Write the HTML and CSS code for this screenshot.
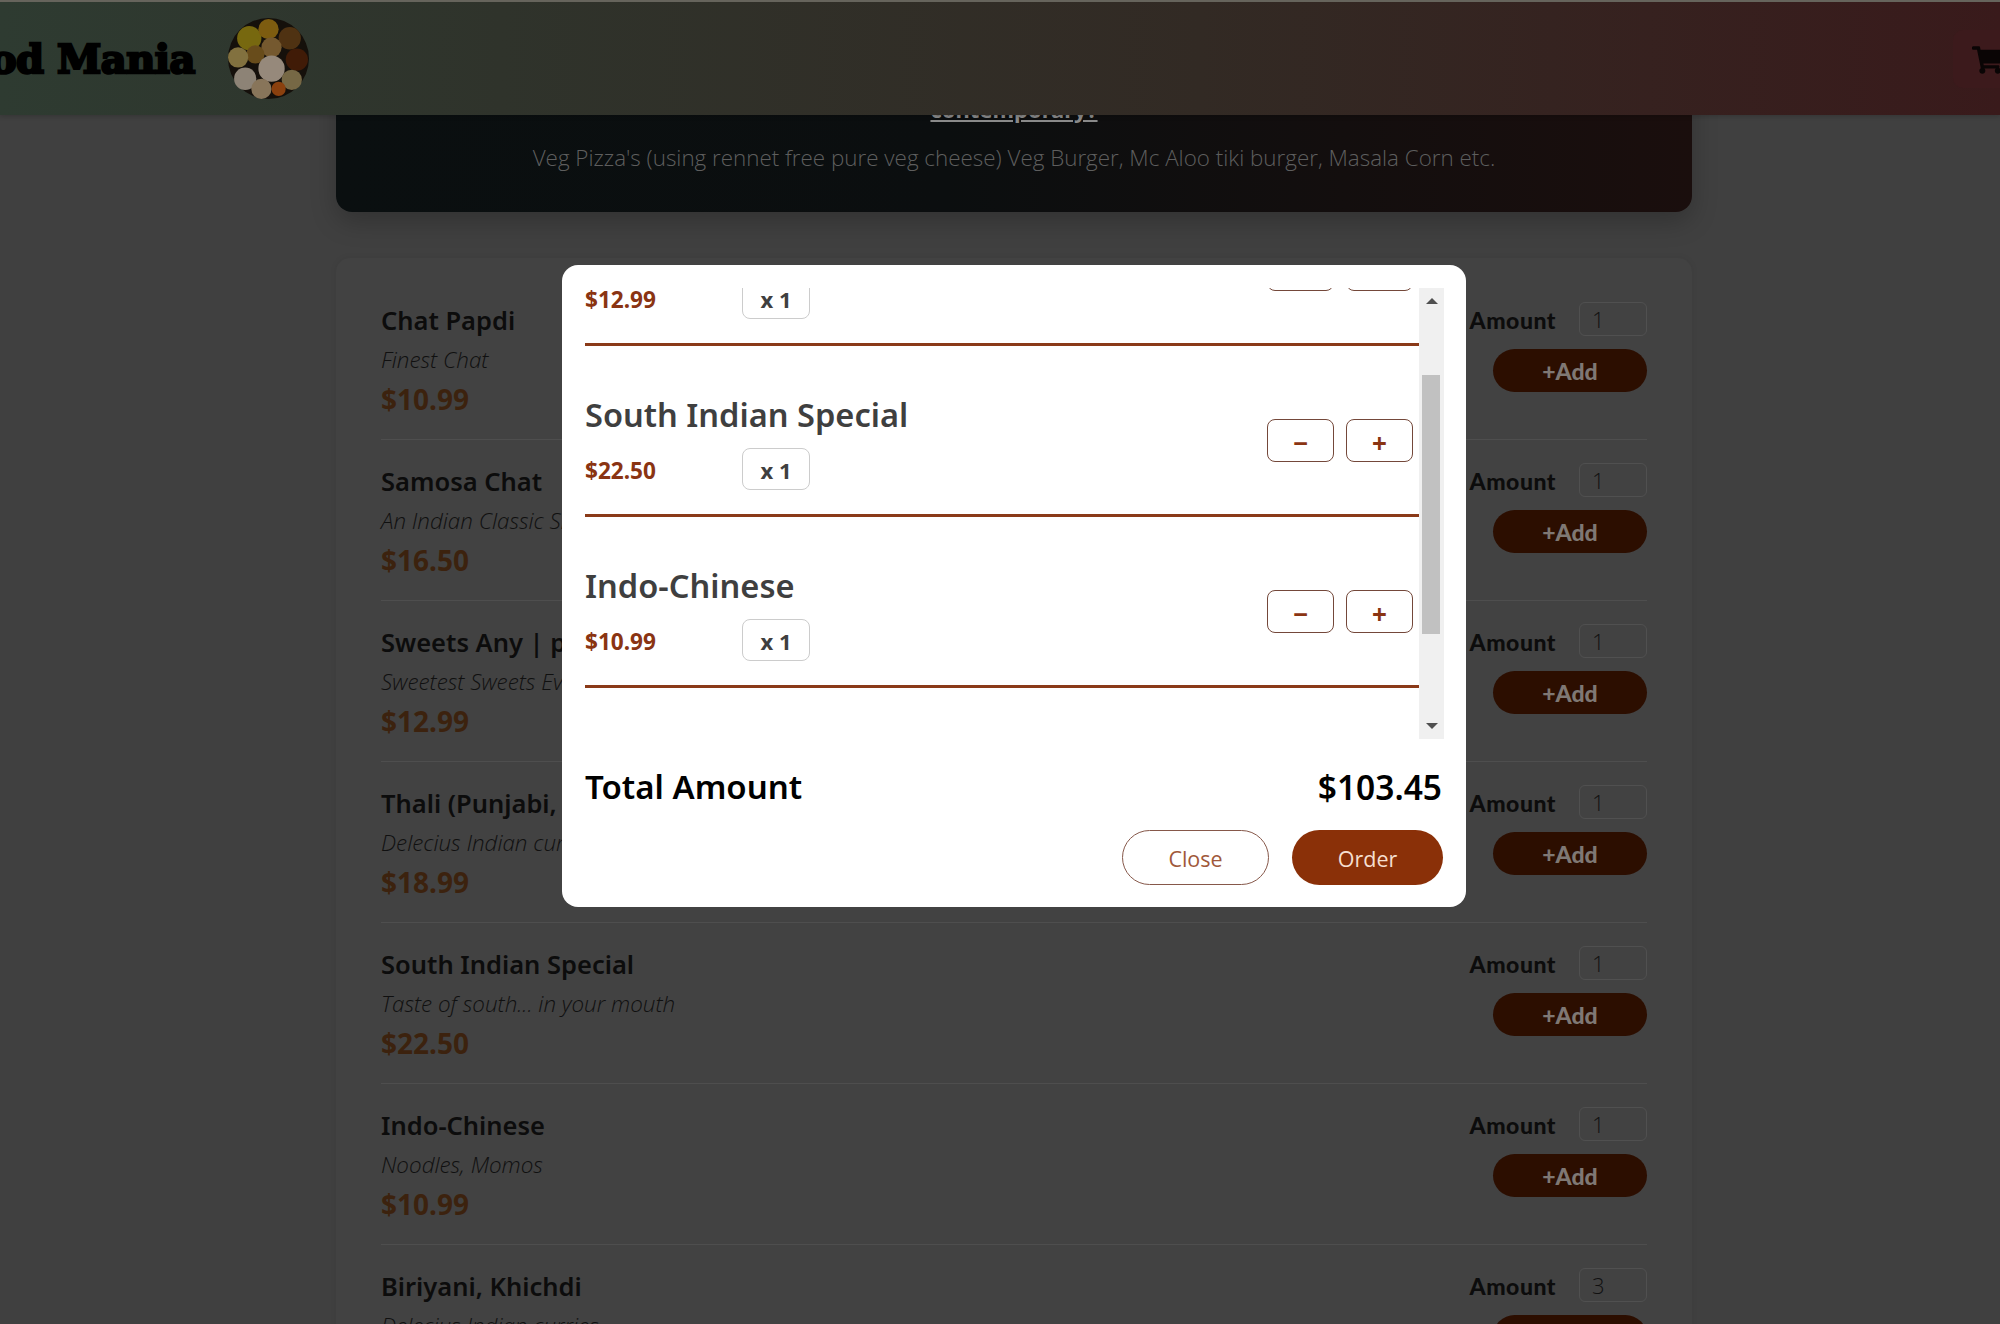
FILE: index.html
```html
<!DOCTYPE html>
<html lang="en">
<head>
  <meta charset="UTF-8" />
  <title>Food Mania</title>
  <link rel="stylesheet" href="styles.css">
</head>
<body>
  <header class="topbar">
    <h1 class="brand">Food Mania</h1>
    <svg class="logo" viewBox="0 0 80 80" aria-hidden="true">
      <circle cx="40" cy="40" r="40" fill="#15100b"/>
      <circle cx="21" cy="20" r="12" fill="#77680f"/>
      <circle cx="40" cy="11" r="10" fill="#7d5c10"/>
      <circle cx="61" cy="20" r="11" fill="#4f3212"/>
      <circle cx="43" cy="29" r="10" fill="#75592f"/>
      <circle cx="27" cy="36" r="9" fill="#684c1b"/>
      <circle cx="68" cy="41" r="11" fill="#401b07"/>
      <circle cx="10" cy="39" r="10" fill="#82713f"/>
      <circle cx="43" cy="50" r="13" fill="#96897b"/>
      <circle cx="17" cy="60" r="11" fill="#8d8376"/>
      <circle cx="33" cy="70" r="10" fill="#88755a"/>
      <circle cx="63" cy="61" r="10" fill="#766845"/>
      <circle cx="50" cy="70" r="7" fill="#8a400e"/>
    </svg>
    <div class="cart">
      <svg viewBox="0 0 576 512" aria-hidden="true"><path d="M528.12 301.319l47.273-208C578.806 78.301 567.391 64 551.99 64H159.208l-9.166-44.81C147.758 8.021 137.93 0 126.529 0H24C10.745 0 0 10.745 0 24v16c0 13.255 10.745 24 24 24h69.883l70.248 343.435C147.325 417.1 136 435.222 136 456c0 30.928 25.072 56 56 56s56-25.072 56-56c0-15.674-6.447-29.835-16.824-40h209.647C430.447 426.165 424 440.326 424 456c0 30.928 25.072 56 56 56s56-25.072 56-56c0-22.172-12.888-41.332-31.579-50.405l5.517-24.276c3.413-15.018-8.002-29.319-23.403-29.319H218.117l-6.545-32h293.145c11.206 0 20.92-7.754 23.403-18.681z"/></svg>
    </div>
  </header>

  <main class="content">
    <section class="banner">
      <h3>contemporary?</h3>
      <p>Veg Pizza's (using rennet free pure veg cheese) Veg Burger, Mc Aloo tiki burger, Masala Corn etc.</p>
    </section>

    <section class="menu">
      <div class="dish">
        <div>
          <h4>Chat Papdi</h4>
          <p class="desc">Finest Chat</p>
          <p class="price">$10.99</p>
        </div>
        <div class="dish-form">
          <label class="amount"><span>Amount</span> <input type="text" value="1"></label>
          <button class="add">+Add</button>
        </div>
      </div>
      <div class="dish">
        <div>
          <h4>Samosa Chat</h4>
          <p class="desc">An Indian Classic Snack</p>
          <p class="price">$16.50</p>
        </div>
        <div class="dish-form">
          <label class="amount"><span>Amount</span> <input type="text" value="1"></label>
          <button class="add">+Add</button>
        </div>
      </div>
      <div class="dish">
        <div>
          <h4>Sweets Any | piece</h4>
          <p class="desc">Sweetest Sweets Ever</p>
          <p class="price">$12.99</p>
        </div>
        <div class="dish-form">
          <label class="amount"><span>Amount</span> <input type="text" value="1"></label>
          <button class="add">+Add</button>
        </div>
      </div>
      <div class="dish">
        <div>
          <h4>Thali (Punjabi, Gujarati)</h4>
          <p class="desc">Delecius Indian curries</p>
          <p class="price">$18.99</p>
        </div>
        <div class="dish-form">
          <label class="amount"><span>Amount</span> <input type="text" value="1"></label>
          <button class="add">+Add</button>
        </div>
      </div>
      <div class="dish">
        <div>
          <h4>South Indian Special</h4>
          <p class="desc">Taste of south... in your mouth</p>
          <p class="price">$22.50</p>
        </div>
        <div class="dish-form">
          <label class="amount"><span>Amount</span> <input type="text" value="1"></label>
          <button class="add">+Add</button>
        </div>
      </div>
      <div class="dish">
        <div>
          <h4>Indo-Chinese</h4>
          <p class="desc">Noodles, Momos</p>
          <p class="price">$10.99</p>
        </div>
        <div class="dish-form">
          <label class="amount"><span>Amount</span> <input type="text" value="1"></label>
          <button class="add">+Add</button>
        </div>
      </div>
      <div class="dish">
        <div>
          <h4>Biriyani, Khichdi</h4>
          <p class="desc">Delecius Indian curries</p>
          <p class="price">$14.99</p>
        </div>
        <div class="dish-form">
          <label class="amount"><span>Amount</span> <input type="text" value="3"></label>
          <button class="add">+Add</button>
        </div>
      </div>
    </section>
  </main>

  <div class="modal">
    <div class="cart-scroll">
      <ul class="cart-items">
        <li class="cart-item">
          <div>
            <h2>Sweets Any | piece</h2>
            <div class="summary">
              <span class="item-price">$12.99</span>
              <span class="qty">x 1</span>
            </div>
          </div>
          <div class="item-actions"><button>−</button><button>+</button></div>
        </li>
        <li class="cart-item">
          <div>
            <h2>South Indian Special</h2>
            <div class="summary">
              <span class="item-price">$22.50</span>
              <span class="qty">x 1</span>
            </div>
          </div>
          <div class="item-actions"><button>−</button><button>+</button></div>
        </li>
        <li class="cart-item">
          <div>
            <h2>Indo-Chinese</h2>
            <div class="summary">
              <span class="item-price">$10.99</span>
              <span class="qty">x 1</span>
            </div>
          </div>
          <div class="item-actions"><button>−</button><button>+</button></div>
        </li>
      </ul>
      <div class="scrollbar">
        <span class="arrow arrow-up"></span>
        <span class="thumb"></span>
        <span class="arrow arrow-down"></span>
      </div>
    </div>
    <div class="total">
      <span class="total-label">Total Amount</span>
      <span class="total-value">$103.45</span>
    </div>
    <div class="modal-actions">
      <button class="btn-close">Close</button>
      <button class="btn-order">Order</button>
    </div>
  </div>
</body>
</html>
```

FILE: styles.css
```css
* {
  box-sizing: border-box;
}
html, body {
  height: 1324px;
  overflow: hidden;
}
body {
  margin: 0;
  font-family: "Noto Sans", "Open Sans", sans-serif;
  background-color: #404040;
}
h1, h2, h3, h4, p, ul {
  margin: 0;
  padding: 0;
}

/* top bar */
.topbar {
  position: relative;
  z-index: 2;
  display: flex;
  align-items: center;
  height: 115px;
  border-top: 2px solid #66645c;
  background: linear-gradient(90deg, #2e3b31 0%, #2f332b 25%, #322a24 60%, #391a1b 100%);
  box-shadow: 0 2px 4px rgba(0,0,0,0.15);
}
.brand {
  margin-left: -62px;
  width: 255px;
  flex-shrink: 0;
  font-family: "DejaVu Serif", serif;
  font-size: 40px;
  font-weight: 700;
  letter-spacing: -0.5px;
  color: #000;
  white-space: nowrap;
  -webkit-text-stroke: 2.5px #000;
}
.logo {
  width: 81px;
  height: 81px;
  margin-left: 35px;
  flex-shrink: 0;
}
.cart {
  margin-left: auto;
  margin-right: -43px;
  width: 90px;
  height: 58px;
  flex-shrink: 0;
  padding: 16px 0 0 19px;
  background-color: #3c1a1c;
  border-radius: 10px;
}
.cart svg {
  display: block;
  width: 31px;
  height: 28px;
  fill: #0a0505;
}

/* page content */
.content {
  width: 1356px;
  margin-left: 336px;
}
.banner {
  height: 137px;
  margin-top: -40px;
  padding-top: 18px;
  text-align: center;
  background: linear-gradient(90deg, #0a0f10 0%, #0b0e0f 45%, #1a0e0d 100%);
  border-radius: 0 0 16px 16px;
  box-shadow: 0 10px 26px rgba(0,0,0,0.22);
}
.banner h3 {
  font-size: 22px;
  line-height: 32px;
  font-weight: 700;
  color: #8a8a8a;
  text-decoration: underline;
}
.banner p {
  margin-top: 17px;
  font-family: "Open Sans", sans-serif;
  font-size: 22.4px;
  font-weight: 300;
  line-height: 32px;
  color: #5e5e5e;
}

.menu {
  margin-top: 46px;
  padding: 21px 45px 0;
  background-color: #424242;
  border-radius: 14px;
  box-shadow: 0 0 6px rgba(0,0,0,0.08);
}
.dish {
  display: flex;
  justify-content: space-between;
  height: 161px;
  padding-top: 21px;
  border-bottom: 1px solid #4e4e4e;
}
.dish h4 {
  font-size: 25.5px;
  line-height: 41px;
  font-weight: 600;
  color: #0c0c0c;
}
.desc {
  font-family: "Open Sans", sans-serif;
  font-size: 22.4px;
  font-style: italic;
  font-weight: 300;
  line-height: 37px;
  color: #101010;
}
.price {
  font-size: 28px;
  line-height: 42px;
  font-weight: 700;
  color: #3c220e;
}
.dish-form {
  display: flex;
  flex-direction: column;
  align-items: flex-end;
  gap: 13px;
  padding-top: 2px;
}
.amount {
  display: flex;
  align-items: center;
  gap: 23px;
  font-family: Lato, sans-serif;
  font-size: 23px;
  font-weight: 900;
  letter-spacing: 0.5px;
  color: #0c0c0c;
}
.amount span {
  padding-top: 2px;
}
.amount input {
  width: 68px;
  height: 34px;
  padding: 0 0 0 12px;
  font-family: "Open Sans", sans-serif;
  font-size: 22px;
  font-weight: 300;
  color: #111;
  background: transparent;
  border: 1px solid #505050;
  border-radius: 6px;
}
.add {
  width: 154px;
  height: 43px;
  font-family: Lato, sans-serif;
  font-size: 23px;
  font-weight: 900;
  color: #7f7874;
  background-color: #2c0e00;
  border: none;
  border-radius: 22px;
}

/* cart modal */
.modal {
  position: fixed;
  left: 562px;
  top: 265px;
  z-index: 5;
  width: 904px;
  height: 642px;
  padding: 23px 22px 22px 23px;
  background: #fff;
  border-radius: 16px;
}
.cart-scroll {
  display: flex;
  height: 451px;
}
.cart-items {
  width: 834px;
  overflow: hidden;
  list-style: none;
}
.cart-item {
  display: flex;
  justify-content: space-between;
  height: 171px;
  padding-right: 6px;
  border-bottom: 3px solid #8a3a18;
}
.cart-item:first-child {
  margin-top: -113px;
}
.cart-item h2 {
  margin-top: 48px;
  font-size: 32.6px;
  line-height: 42px;
  font-weight: 600;
  color: #3f3f3f;
}
.summary {
  display: flex;
  align-items: center;
  margin-top: 12px;
}
.item-price {
  width: 157px;
  padding-top: 2px;
  font-size: 22.6px;
  font-weight: 700;
  color: #8a3412;
}
.qty {
  width: 68px;
  height: 42px;
  font-size: 22px;
  font-weight: 700;
  line-height: 43px;
  text-align: center;
  color: #3f3f3f;
  border: 1px solid #ccc;
  border-radius: 8px;
}
.item-actions {
  display: flex;
  gap: 12px;
  margin-top: 73px;
}
.item-actions button {
  width: 67px;
  height: 43px;
  padding: 4px 0 0;
  font-family: "Noto Sans", sans-serif;
  font-size: 26px;
  font-weight: 700;
  line-height: 1;
  color: #8a3412;
  background: #fff;
  border: 1.5px solid #74483a;
  border-radius: 8px;
}
.scrollbar {
  display: flex;
  flex-direction: column;
  width: 25px;
  background-color: #f0f0f0;
}
.arrow {
  align-self: center;
  width: 0;
  height: 0;
  border-left: 6px solid transparent;
  border-right: 6px solid transparent;
}
.arrow-up {
  margin-top: 10px;
  border-bottom: 6px solid #505050;
}
.arrow-down {
  margin-top: auto;
  margin-bottom: 10px;
  border-top: 6px solid #505050;
}
.thumb {
  width: 18px;
  height: 259px;
  margin: 71px 0 0 3px;
  background-color: #c1c1c1;
}
.total {
  display: flex;
  justify-content: space-between;
  padding-top: 24px;
  line-height: 48px;
  font-weight: 600;
  color: #000;
}
.total-label {
  font-size: 33px;
}
.total-value {
  margin-right: 2px;
  font-size: 33.5px;
}
.modal-actions {
  display: flex;
  justify-content: flex-end;
  gap: 23px;
  margin-top: 19px;
  padding-right: 1px;
}
.modal-actions button {
  height: 55px;
  padding-top: 2px;
  font-family: "Open Sans", sans-serif;
  font-size: 21.5px;
  border-radius: 28px;
}
.btn-close {
  width: 147px;
  color: #a0583a;
  background: #fff;
  border: 1.5px solid #86584a;
}
.btn-order {
  width: 151px;
  color: #f5dfd0;
  background-color: #8a3008;
  border: none;
}
```
